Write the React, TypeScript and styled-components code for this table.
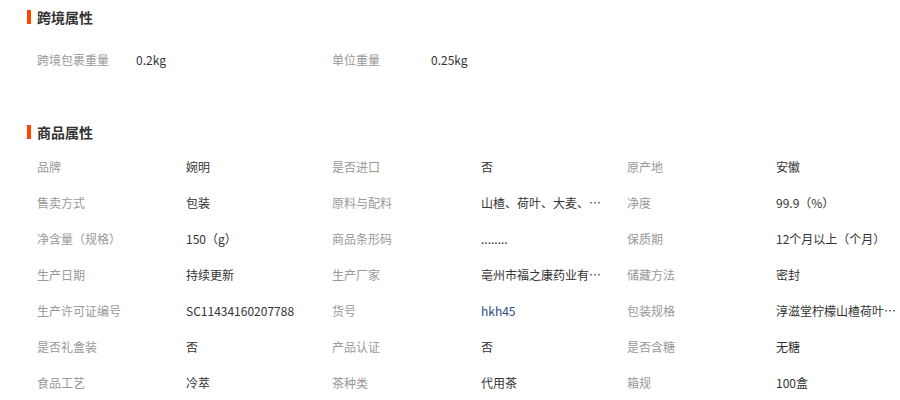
import styled, { createGlobalStyle } from "styled-components";

const GlobalStyle = createGlobalStyle`
  body {
    margin: 0;
    background: #fff;
    font-family: "Noto Sans CJK SC", "Liberation Sans", sans-serif;
  }
`;

type Attr = { label: string; value: string; tone?: "link" };

const crossBorder: Attr[] = [
  { label: "跨境包裹重量", value: "0.2kg" },
  { label: "单位重量", value: "0.25kg" },
];

const goods: Attr[] = [
  { label: "品牌", value: "婉明" },
  { label: "是否进口", value: "否" },
  { label: "原产地", value: "安徽" },
  { label: "售卖方式", value: "包装" },
  { label: "原料与配料", value: "山楂、荷叶、大麦、决明子、玫瑰花、柠檬片" },
  { label: "净度", value: "99.9（%）" },
  { label: "净含量（规格）", value: "150（g）" },
  { label: "商品条形码", value: "........" },
  { label: "保质期", value: "12个月以上（个月）" },
  { label: "生产日期", value: "持续更新" },
  { label: "生产厂家", value: "亳州市福之康药业有限公司" },
  { label: "储藏方法", value: "密封" },
  { label: "生产许可证编号", value: "SC11434160207788" },
  { label: "货号", value: "hkh45", tone: "link" },
  { label: "包装规格", value: "淳滋堂柠檬山楂荷叶茶冬瓜荷叶茶" },
  { label: "是否礼盒装", value: "否" },
  { label: "产品认证", value: "否" },
  { label: "是否含糖", value: "无糖" },
  { label: "食品工艺", value: "冷萃" },
  { label: "茶种类", value: "代用茶" },
  { label: "箱规", value: "100盒" },
];

const AttrGroup = ({
  title,
  items,
  labelWidth,
  top,
  listTop,
}: {
  title: string;
  items: Attr[];
  labelWidth: number;
  top: number;
  listTop: number;
}) => (
  <Section $top={top}>
    <Heading>{title}</Heading>
    <List $top={listTop}>
      {items.map((item) => (
        <Item key={item.label}>
          <Label $w={labelWidth}>{item.label}</Label>
          <Value $tone={item.tone} title={item.value}>
            {item.value}
          </Value>
        </Item>
      ))}
    </List>
  </Section>
);

const App = () => (
  <Page>
    <GlobalStyle />
    <AttrGroup title="跨境属性" items={crossBorder} labelWidth={99} top={7} listTop={14} />
    <AttrGroup title="商品属性" items={goods} labelWidth={149} top={45} listTop={6} />
  </Page>
);

const Page = styled.div`
  width: 900px;
  height: 400px;
  overflow: hidden;
  padding-left: 27px;
  box-sizing: border-box;
`;

const Section = styled.section<{ $top: number }>`
  margin-top: ${(p) => p.$top}px;
`;

const Heading = styled.h3`
  margin: 0;
  height: 20px;
  line-height: 20px;
  font-size: 14px;
  font-weight: bold;
  color: #333;
  display: flex;
  align-items: center;
  gap: 6px;
  &::before {
    content: "";
    width: 4px;
    height: 14px;
    background: #ff4400;
  }
`;

const List = styled.div<{ $top: number }>`
  margin-top: ${(p) => p.$top}px;
  padding-left: 10px;
  display: grid;
  grid-template-columns: repeat(3, 295px);
`;

const Item = styled.div`
  display: flex;
  align-items: center;
  height: 36px;
  font-size: 12px;
`;

const Label = styled.span<{ $w: number }>`
  width: ${(p) => p.$w}px;
  flex-shrink: 0;
  color: #999;
  white-space: nowrap;
`;

const Value = styled.span<{ $tone?: "link" }>`
  max-width: 122px;
  color: ${(p) => (p.$tone === "link" ? "#2c4e88" : "#333")};
  white-space: nowrap;
  overflow: hidden;
  text-overflow: ellipsis;
`;

export default App;
